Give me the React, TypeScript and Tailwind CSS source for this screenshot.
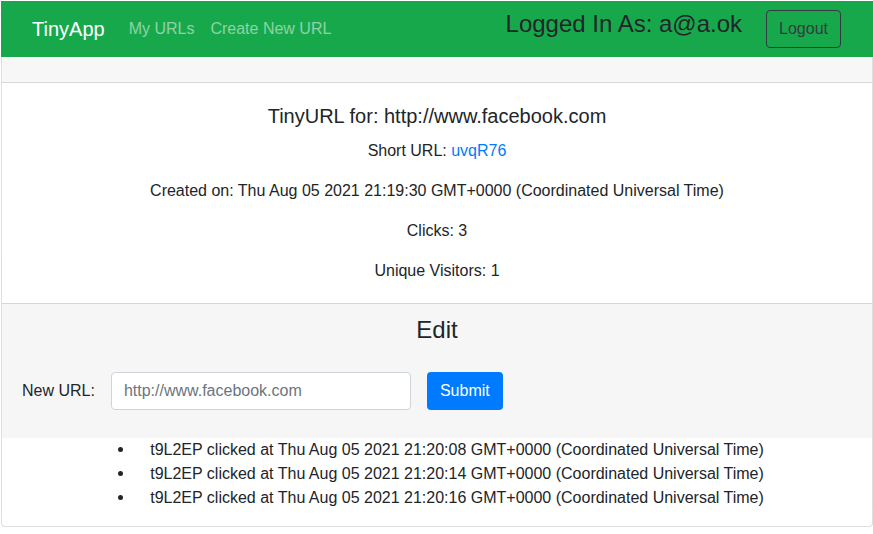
const clicks = [
  't9L2EP clicked at Thu Aug 05 2021 21:20:08 GMT+0000 (Coordinated Universal Time)',
  't9L2EP clicked at Thu Aug 05 2021 21:20:14 GMT+0000 (Coordinated Universal Time)',
  't9L2EP clicked at Thu Aug 05 2021 21:20:16 GMT+0000 (Coordinated Universal Time)',
];

function Navbar() {
  return (
    <nav className="h-[56px] bg-[#18a84c] flex items-center justify-between pl-[31px] pr-8">
      <div className="flex items-center">
        <span className="text-[20px] text-white mr-4">TinyApp</span>
        <a className="px-2 text-[16px] text-white/50">My URLs</a>
        <a className="px-2 text-[16px] text-white/50">Create New URL</a>
      </div>
      <div className="flex items-center">
        <h4 className="text-[24px] leading-[1.2] text-[#212529] mr-6 mb-[10px]">Logged In As: a@a.ok</h4>
        <button className="h-[38px] px-3 border border-[#343a40] rounded text-[16px] text-[#343a40]">Logout</button>
      </div>
    </nav>
  );
}

export default function App() {
  return (
    <div
      className="min-h-[534px] bg-white pt-px pl-px text-[#212529] text-[16px] leading-6"
      style={{ fontFamily: '"Liberation Sans", Arial, sans-serif' }}
    >
      <Navbar />
      <div className="border border-t-0 border-black/[.125] rounded-b">
        <div className="h-[26px] bg-[#f7f7f7] border-b border-black/[.125]" />

        <div className="px-5 pt-[21px] pb-5 text-center">
          <h5 className="text-[20px] leading-6 mb-[11px]">TinyURL for: http://www.facebook.com</h5>
          <p className="mb-4">
            Short URL: <a className="text-[#007bff]">uvqR76</a>
          </p>
          <p className="mb-4">Created on: Thu Aug 05 2021 21:19:30 GMT+0000 (Coordinated Universal Time)</p>
          <p className="mb-4">Clicks: 3</p>
          <p>Unique Visitors: 1</p>
        </div>

        <div className="bg-[#f6f6f6] border-t border-black/[.125] pt-3 pb-[28px]">
          <h3 className="text-[24px] leading-[1.2] text-center">Edit</h3>
          <form className="flex items-center pl-5 mt-[27px]" onSubmit={(e) => e.preventDefault()}>
            <label className="mr-4">New URL:</label>
            <input
              className="w-[300px] h-[38px] px-3 bg-white border border-[#ced4da] rounded placeholder:text-[#6c757d] outline-none"
              placeholder="http://www.facebook.com"
            />
            <button className="ml-4 h-[38px] px-[13px] bg-[#007bff] text-white rounded">Submit</button>
          </form>
        </div>

        <ul className="pl-2 w-fit mx-auto mb-4">
          {clicks.map((c) => (
            <li key={c} className="flex items-center">
              <span className="w-8 shrink-0 flex">
                <span className="w-[5px] h-[5px] rounded-full bg-[#212529]" />
              </span>
              {c}
            </li>
          ))}
        </ul>
      </div>
    </div>
  );
}
